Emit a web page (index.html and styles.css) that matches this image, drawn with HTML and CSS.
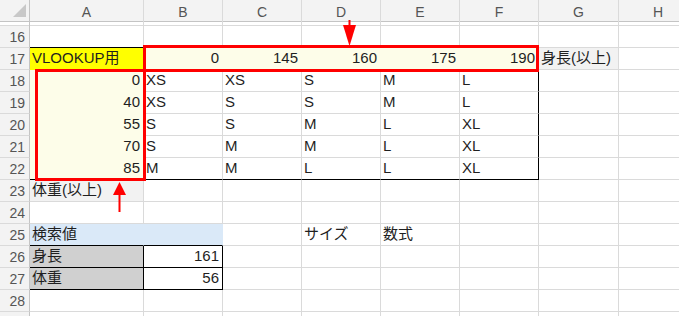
FILE: index.html
```html
<!DOCTYPE html>
<html lang="ja">
<head>
<meta charset="utf-8">
<title>VLOOKUP</title>
<link rel="stylesheet" href="styles.css">
</head>
<body>
<div class="sheet">
  <div class="row head">
    <div class="c corner"><span class="tri"></span></div>
    <div class="c ch">A</div><div class="c ch">B</div><div class="c ch">C</div><div class="c ch">D</div>
    <div class="c ch">E</div><div class="c ch">F</div><div class="c ch">G</div><div class="c ch">H</div>
  </div>
  <div class="row">
    <div class="c rh">16</div>
    <div class="c bb"></div><div class="c bb"></div><div class="c bb"></div><div class="c bb"></div>
    <div class="c bb"></div><div class="c bb"></div><div class="c"></div><div class="c"></div>
  </div>
  <div class="row">
    <div class="c rh">17</div>
    <div class="c yel">VLOOKUP用</div>
    <div class="c ly n">0</div><div class="c ly n">145</div><div class="c ly n">160</div>
    <div class="c ly n">175</div><div class="c ly n br">190</div>
    <div class="c gr">身長(以上)</div><div class="c"></div>
  </div>
  <div class="row">
    <div class="c rh">18</div>
    <div class="c ly n">0</div>
    <div class="c">XS</div><div class="c">XS</div><div class="c">S</div><div class="c">M</div><div class="c br">L</div>
    <div class="c"></div><div class="c"></div>
  </div>
  <div class="row">
    <div class="c rh">19</div>
    <div class="c ly n">40</div>
    <div class="c">XS</div><div class="c">S</div><div class="c">S</div><div class="c">M</div><div class="c br">L</div>
    <div class="c"></div><div class="c"></div>
  </div>
  <div class="row">
    <div class="c rh">20</div>
    <div class="c ly n">55</div>
    <div class="c">S</div><div class="c">S</div><div class="c">M</div><div class="c">L</div><div class="c br">XL</div>
    <div class="c"></div><div class="c"></div>
  </div>
  <div class="row">
    <div class="c rh">21</div>
    <div class="c ly n">70</div>
    <div class="c">S</div><div class="c">M</div><div class="c">M</div><div class="c">L</div><div class="c br">XL</div>
    <div class="c"></div><div class="c"></div>
  </div>
  <div class="row">
    <div class="c rh">22</div>
    <div class="c ly n bb">85</div>
    <div class="c bb">M</div><div class="c bb">M</div><div class="c bb">L</div><div class="c bb">L</div><div class="c bb br">XL</div>
    <div class="c"></div><div class="c"></div>
  </div>
  <div class="row">
    <div class="c rh">23</div>
    <div class="c gr">体重(以上)</div>
    <div class="c"></div><div class="c"></div><div class="c"></div><div class="c"></div><div class="c"></div>
    <div class="c"></div><div class="c"></div>
  </div>
  <div class="row">
    <div class="c rh">24</div>
    <div class="c"></div><div class="c"></div><div class="c"></div><div class="c"></div><div class="c"></div>
    <div class="c"></div><div class="c"></div><div class="c"></div>
  </div>
  <div class="row">
    <div class="c rh">25</div>
    <div class="c bl bb">検索値</div><div class="c bl bb"></div>
    <div class="c"></div><div class="c">サイズ</div><div class="c">数式</div><div class="c"></div>
    <div class="c"></div><div class="c"></div>
  </div>
  <div class="row">
    <div class="c rh">26</div>
    <div class="c g2 bb br">身長</div><div class="c n bb br">161</div>
    <div class="c"></div><div class="c"></div><div class="c"></div><div class="c"></div>
    <div class="c"></div><div class="c"></div>
  </div>
  <div class="row">
    <div class="c rh">27</div>
    <div class="c g2 bb br">体重</div><div class="c n bb br">56</div>
    <div class="c"></div><div class="c"></div><div class="c"></div><div class="c"></div>
    <div class="c"></div><div class="c"></div>
  </div>
  <div class="row">
    <div class="c rh">28</div>
    <div class="c"></div><div class="c"></div><div class="c"></div><div class="c"></div><div class="c"></div>
    <div class="c"></div><div class="c"></div><div class="c"></div>
  </div>
  <div class="row">
    <div class="c rh"></div>
    <div class="c"></div><div class="c"></div><div class="c"></div><div class="c"></div><div class="c"></div>
    <div class="c"></div><div class="c"></div><div class="c"></div>
  </div>

  <div class="mark mark-height"></div>
  <div class="mark mark-weight"></div>
  <svg class="arrow arrow-down" width="15" height="27" viewBox="0 0 15 27">
    <rect x="6.5" y="0" width="2" height="7" fill="#ff0000"/>
    <polygon points="1,5 14,5 7.5,26" fill="#ff0000"/>
  </svg>
  <svg class="arrow arrow-up" width="15" height="32" viewBox="0 0 15 32">
    <rect x="6.5" y="12" width="2" height="19" fill="#ff0000"/>
    <polygon points="1,14 14,14 7.5,1" fill="#ff0000"/>
  </svg>
</div>
</body>
</html>
```
FILE: styles.css
```css
html, body {
  margin: 0;
  padding: 0;
  background: #ffffff;
}

.sheet {
  position: relative;
  width: 679px;
  height: 316px;
  overflow: hidden;
  font-family: "Liberation Sans", "Noto Sans CJK JP", sans-serif;
  font-size: 15px;
  color: #1f1f1f;
}

.row {
  display: grid;
  grid-template-columns: 30px 114px 79px 79px 79px 79px 79px 80px 79px;
  height: 22px;
}

.c {
  box-sizing: border-box;
  height: 22px;
  border-right: 1px solid #dadada;
  border-bottom: 1px solid #dadada;
  padding: 0 2px;
  line-height: 19px;
  white-space: nowrap;
}

.head {
  height: 26px;
}

.head .c {
  height: 26px;
  border-bottom: none;
  background: linear-gradient(to bottom, #f3f3f3 0, #f3f3f3 21px, #c4c4c4 21px, #c4c4c4 22px, #ffffff 22px, #ffffff 25px, #dadada 25px, #dadada 26px);
}

.ch {
  text-align: center;
  font-size: 14px;
  line-height: 21px;
  padding-top: 2px;
  color: #555555;
}

.corner {
  display: flex;
  justify-content: flex-end;
  align-items: flex-end;
  padding: 0 3px 9px 0;
  border-right-color: #c4c4c4 !important;
}

.tri {
  width: 13px;
  height: 13px;
  background: #c8c8c8;
  clip-path: polygon(100% 0, 100% 100%, 0 100%);
}

.rh {
  background: #f3f3f3;
  border-right: 1px solid #c4c4c4;
  font-size: 14px;
  color: #555555;
  text-align: right;
  padding: 2px 4px 0 0;
}

.n {
  text-align: right;
  padding-right: 3px;
}

.yel {
  background: #ffff00;
  border-bottom-color: #ffff00;
}

.ly {
  background: #fdfde9;
  border-right-color: #fdfde9;
  border-bottom-color: #fdfde9;
}

.gr {
  background: #f2f2f2;
}

.bl {
  background: #dae9f8;
  border-right-color: #dae9f8;
}

.g2 {
  background: #d0d0d0;
}

.bb {
  border-bottom-color: #000000;
}

.br {
  border-right-color: #000000;
}

.mark {
  position: absolute;
  box-sizing: border-box;
  border: 3px solid #ff0000;
}

.mark-height {
  left: 143px;
  top: 45px;
  width: 396px;
  height: 27px;
}

.mark-weight {
  left: 35px;
  top: 69px;
  width: 111px;
  height: 112px;
}

.arrow {
  position: absolute;
  display: block;
}

.arrow-down {
  left: 342px;
  top: 20px;
}

.arrow-up {
  left: 112px;
  top: 181px;
}
```
